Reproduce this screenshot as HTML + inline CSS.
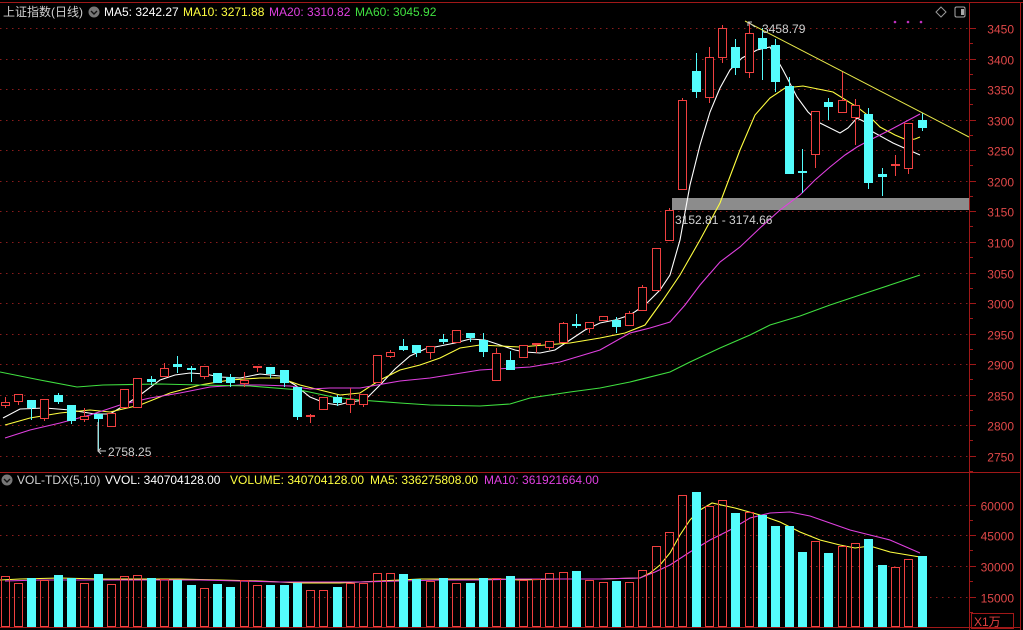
<!DOCTYPE html>
<html><head><meta charset="utf-8">
<style>
html,body{margin:0;padding:0;background:#000;}
body{width:1023px;height:630px;overflow:hidden;position:relative;font-family:"Liberation Sans","Noto Sans CJK SC",sans-serif;}
svg{position:absolute;left:0;top:0;}
text{font-family:"Liberation Sans","Noto Sans CJK SC",sans-serif;font-size:12px;}
#cd rect,#cd line{shape-rendering:crispEdges;}
</style></head><body>
<svg id="s" width="1023" height="630" viewBox="0 0 1023 630" xmlns="http://www.w3.org/2000/svg">
<rect width="1023" height="630" fill="#000"/>
<g id="grid" shape-rendering="crispEdges"></g>
<rect x="672" y="198" width="297" height="12" fill="#8c8c8c"/>
<g id="ma" fill="none" stroke-width="1.1"></g>
<g id="cd"></g>
<line x1="745" y1="21" x2="969" y2="137" stroke="#e8e84a" stroke-width="1"/>
<g shape-rendering="crispEdges">
<line x1="0" y1="2.5" x2="1023" y2="2.5" stroke="#a01818"/>
<line x1="0" y1="472.5" x2="1020" y2="472.5" stroke="#a01818"/>
<line x1="0" y1="627.5" x2="1020" y2="627.5" stroke="#a01818"/>
<line x1="969.5" y1="2" x2="969.5" y2="630" stroke="#a01818"/>
<line x1="1020.5" y1="2" x2="1020.5" y2="630" stroke="#a01818"/>
</g>
<text x="3" y="16" fill="#d0d0d0">上证指数(日线)</text>
<circle cx="94" cy="12" r="5.5" fill="#777"/>
<path d="M91 11 L94 14 L97 11" stroke="#111" stroke-width="1.4" fill="none"/>
<text x="104" y="16" fill="#fff">MA5: 3242.27</text>
<text x="183" y="16" fill="#ffff40">MA10: 3271.88</text>
<text x="269" y="16" fill="#e040e0">MA20: 3310.82</text>
<text x="355" y="16" fill="#40e040">MA60: 3045.92</text>
<circle cx="895" cy="22" r="1.3" fill="#c030c0"/><circle cx="908" cy="22" r="1.3" fill="#c030c0"/><circle cx="921" cy="22" r="1.3" fill="#c030c0"/>
<path d="M941 7 L946 12 L941 17 L936 12 Z" stroke="#999" fill="none"/>
<rect x="955" y="7" width="10" height="10" rx="1.5" stroke="#aaa" fill="none"/>
<rect x="961" y="9" width="3" height="6" fill="#aaa"/>
<path d="M748 22 L755 27 M748 22 L748 26 M748 22 L752 22" stroke="#ccc" fill="none"/>
<text x="762" y="33" fill="#d0d0d0">3458.79</text>
<path d="M98 422 L98 451 L106 451 M98 451 L101 448 M98 451 L101 454" stroke="#ccc" fill="none"/>
<text x="108" y="456" fill="#d0d0d0">2758.25</text>
<text x="675" y="224" fill="#d0d0d0">3152.81 - 3174.66</text>
<circle cx="7" cy="480" r="5.5" fill="#777"/>
<path d="M4 479 L7 482 L10 479" stroke="#111" stroke-width="1.4" fill="none"/>
<text x="17" y="484" fill="#d0d0d0">VOL-TDX(5,10)</text>
<text x="105" y="484" fill="#fff">VVOL: 340704128.00</text>
<text x="230" y="484" fill="#ffff40">VOLUME: 340704128.00</text>
<text x="370" y="484" fill="#ffff40">MA5: 336275808.00</text>
<text x="484" y="484" fill="#e040e0">MA10: 361921664.00</text>
<rect x="971.5" y="613.5" width="42" height="15" fill="none" stroke="#a01818"/>
<text x="974" y="626" fill="#e04040">X1万</text>
<g id="ax" fill="#e04848"></g>
</svg>
<script>
var NS="http://www.w3.org/2000/svg";
function el(p,t,a,txt){var e=document.createElementNS(NS,t);for(var k in a)e.setAttribute(k,a[k]);if(txt)e.textContent=txt;document.getElementById(p).appendChild(e);return e;}
for(var i=0;i<15;i++){var p=3450-50*i,y=Math.round(28+i*30.57)+0.5;
 el("grid","line",{x1:0,y1:y,x2:968,y2:y,stroke:"#8a1c1c","stroke-dasharray":"1.5 4.5"});
 el("grid","line",{x1:969,y1:y,x2:976,y2:y,stroke:"#a01818"});
 el("grid","line",{x1:969,y1:y+15,x2:973,y2:y+15,stroke:"#a01818"});
 el("ax","text",{x:1014,y:y+5,"text-anchor":"end"},String(p));}
var vg=[[505.5,"60000"],[535.5,"45000"],[566.5,"30000"],[597.5,"15000"]];
vg.forEach(function(v){el("grid","line",{x1:0,y1:v[0],x2:968,y2:v[0],stroke:"#8a1c1c","stroke-dasharray":"1.5 4.5"});
 el("grid","line",{x1:969,y1:v[0],x2:976,y2:v[0],stroke:"#a01818"});
 el("grid","line",{x1:969,y1:v[0]+15,x2:973,y2:v[0]+15,stroke:"#a01818"});
 el("ax","text",{x:1014,y:v[0]+5,"text-anchor":"end"},v[1]);});
var C=[["r",402,405,397,408],["r",394,401,394,405],["c",400,408,400,420],["r",399,418,399,421],["c",395,402,393,404],["c",405,421,405,424],["r",416,419,408,422],["c",414,419,414,451],["r",413,426,413,426],["r",389,407,389,407],["r",378,407,378,407],["c",379,382,376,385],["r",368,376,363,376],["c",364,367,356,373],["c",368,370,366,382],["r",366,376,366,379],["c",373,383,373,383],["c",377,383,374,387],["r",380,383,372,387],["r",366,367,366,372],["c",367,374,367,378],["c",370,383,370,387],["c",387,417,387,420],["r",415,417,414,423],["r",397,409,397,409],["c",397,403,395,406],["r",399,404,388,413],["r",394,404,394,407],["r",355,382,355,382],["r",352,356,350,358],["c",346,350,339,351],["c",345,353,345,357],["r",346,352,346,359],["c",339,342,334,344],["r",330,342,330,342],["c",333,338,333,342],["c",340,352,333,357],["r",353,380,348,381],["c",360,370,351,370],["r",345,357,345,358],["r",343,345,343,353],["r",341,347,341,350],["r",323,342,322,342],["c",324,325,314,328],["r",322,328,322,333],["r",316,320,316,320],["c",320,327,317,333],["r",313,325,311,325],["r",287,310,285,310],["r",248,290,248,290],["r",210,240,208,240],["r",100,189,98,189],["c",71,92,53,98],["r",57,97,47,103],["r",28,57,25,63],["c",47,68,39,75],["r",33,72,23,78],["c",38,49,28,80],["c",45,82,39,92],["c",86,174,77,174],["c",171,173,149,193],["r",111,154,111,168],["c",102,107,98,120],["r",100,112,72,112],["r",105,117,99,145],["c",114,183,108,189],["c",174,177,168,196],["r",164,166,155,176],["r",123,168,123,174],["c",120,128,113,131]];
var V=[576,583,578,580,575,578,583,574,584,576,575,578,579,580,585,588,584,587,580,585,585,585,583,590,590,587,583,583,573,573,574,579,581,578,583,583,578,578,576,580,579,573,572,571,580,582,581,582,570,546,532,495,492,506,500,513,512,515,526,526,552,541,553,546,543,539,565,567,559,556];
var R="#f04040",CY="#54fcfc";
C.forEach(function(c,i){var xi=Math.round(4.5+i*13.29);var x=xi+0.5;var col=c[0]=="r"?R:CY;
 el("cd","line",{x1:x,y1:c[3],x2:x,y2:c[4],stroke:col});
 var h=Math.max(1,c[2]-c[1]);
 if(c[0]=="r"){ if(h<=2) el("cd","rect",{x:xi-4,y:c[1],width:9,height:2,fill:R}); else el("cd","rect",{x:xi-3.5,y:c[1]+0.5,width:8,height:h,fill:"#000",stroke:R});}
 else el("cd","rect",{x:xi-4,y:c[1],width:9,height:Math.max(2,h),fill:CY});
 var vt=V[i];
 if(c[0]=="r") el("cd","rect",{x:xi-3.5,y:vt+0.5,width:8,height:626-vt,fill:"none",stroke:R});
 else el("cd","rect",{x:xi-4,y:vt,width:9,height:627-vt,fill:CY});
});
function pl(pts,col){el("ma","polyline",{points:pts,stroke:col});}
pl("3,418 20,409 45,408 70,410 95,414 110,414 125,405 140,395 160,380 175,375 190,373 205,374 220,377 240,378 260,374 280,376 295,385 310,397 325,403 338,405 350,402 365,400 380,385 395,369 410,356 425,349 440,346 455,343 470,339 485,340 500,345 515,350 525,352 540,353 555,350 570,340 585,330 600,323 615,320 630,315 645,305 660,290 670,275 680,240 690,185 700,145 710,112 720,88 730,70 742,58 757,50 770,47 783,70 797,97 808,112 820,123 840,133 848,128 857,118 865,122 873,132 893,143 920,155","#ffffff");
pl("5,425 30,418 60,413 90,410 110,412 140,405 170,393 200,385 230,380 260,378 280,378 300,385 320,390 340,395 360,393 380,380 400,370 420,365 440,358 460,348 480,345 500,346 520,347 545,345 570,343 600,338 625,333 645,325 663,300 680,275 700,240 720,203 740,150 755,115 770,98 785,88 803,86 833,92 857,107 870,117 880,127 895,135 907,140 915,139 920,137","#ffff40");
pl("5,438 30,430 60,423 90,415 120,405 150,398 180,393 210,387 240,385 260,385 290,386 310,389 330,388 360,388 400,381 430,378 480,370 530,367 560,362 600,350 630,333 650,328 670,322 685,305 700,285 720,262 740,247 760,228 780,210 800,195 815,180 830,167 845,155 857,147 870,140 890,130 905,122 920,114","#e040e0");
pl("0,372 40,380 77,387 103,385 160,384 200,385 250,386 300,390 333,397 360,400 400,403 430,405 480,406 510,404 530,398 570,392 600,388 630,382 670,372 690,362 720,348 750,335 770,325 800,316 830,305 860,295 890,285 920,275","#40e040");
pl("0,580 20,579 60,578 100,579 140,579 180,579 220,580 260,581 300,583 340,583 380,581 420,579 460,579 500,579 520,580 560,579 600,579 640,578 650,573 660,565 670,553 680,535 690,520 700,510 712,503 735,508 760,515 780,522 800,532 820,540 840,545 855,548 870,546 890,552 920,557","#ffff40");
pl("5,581 40,580 80,580 120,580 160,580 200,580 240,581 280,582 320,582 360,582 400,581 440,580 480,580 520,579 560,579 600,579 640,578 655,572 670,565 690,552 710,540 730,530 750,518 770,513 790,512 810,516 830,523 850,530 870,535 890,540 920,553","#e040e0");
</script>
</body></html>
